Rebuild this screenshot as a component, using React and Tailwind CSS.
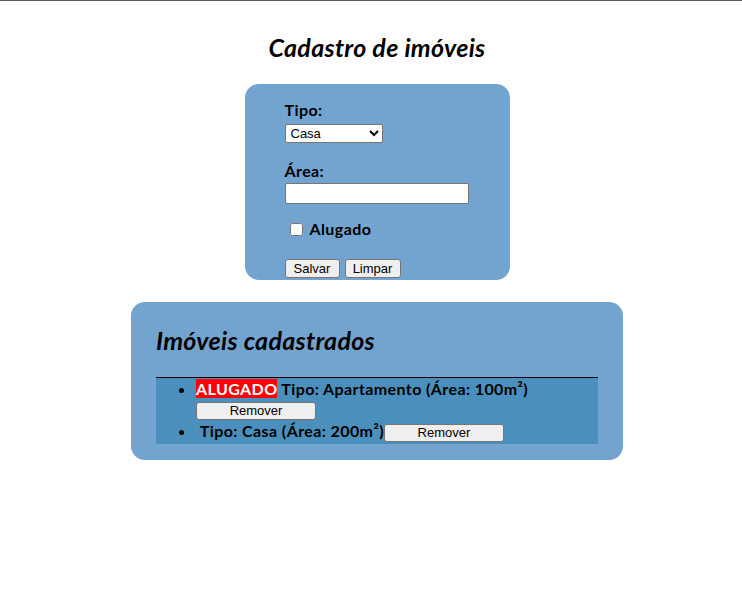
import { useState } from 'react'

const initial = [
  { id: 1, tipo: 'Apartamento', area: 100, alugado: true },
  { id: 2, tipo: 'Casa', area: 200, alugado: false },
]

const btn =
  "bg-[#efefef] border border-[#767676] rounded-[3px] text-[13px] leading-[15px] text-black font-['Liberation_Sans',Arial,sans-serif] font-normal tracking-normal"

export default function App() {
  const [imoveis, setImoveis] = useState(initial)
  const [tipo, setTipo] = useState('Casa')
  const [area, setArea] = useState('')
  const [alugado, setAlugado] = useState(false)

  const salvar = (e) => {
    e.preventDefault()
    if (!area) return
    setImoveis([...imoveis, { id: Date.now(), tipo, area: Number(area), alugado }])
    setArea('')
    setAlugado(false)
  }

  const limpar = () => {
    setTipo('Casa')
    setArea('')
    setAlugado(false)
  }

  return (
    <div className="min-h-screen bg-white border-t border-[#5a5a5a] pl-3 font-['Lato','Noto_Sans',sans-serif] text-black">
      <h1 className="text-center text-[25px] leading-8 tracking-[0.3px] font-bold italic mt-[30px]">
        Cadastro de imóveis
      </h1>

      {/* Formulário */}
      <form
        onSubmit={salvar}
        className="w-[265px] mx-auto mt-[21px] bg-[#73a4cf] rounded-[14px] pl-10 pt-[14px] pb-[2px] font-bold tracking-[0.4px]"
      >
        <label className="block text-base leading-6">Tipo:</label>
        <select
          value={tipo}
          onChange={(e) => setTipo(e.target.value)}
          className="block mt-[2px] w-[98px] h-[19px] bg-white border border-[#767676] rounded-[2px] text-[13px] font-normal tracking-normal font-['Liberation_Sans',Arial,sans-serif] px-[1px]"
        >
          <option>Casa</option>
          <option>Apartamento</option>
        </select>

        <label className="block text-base leading-6 mt-4">Área:</label>
        <input
          type="number"
          value={area}
          onChange={(e) => setArea(e.target.value)}
          className="block w-[184px] h-[21px] bg-white border border-[#767676] rounded-[2px] font-normal text-[13px]"
        />

        <div className="flex items-center mt-[13px] h-6">
          <input
            type="checkbox"
            checked={alugado}
            onChange={(e) => setAlugado(e.target.checked)}
            className="ml-[5px] w-[13px] h-[13px]"
          />
          <span className="ml-[7px] text-base">Alugado</span>
        </div>

        <div className="flex gap-[5px] mt-[18px]">
          <button type="submit" className={`${btn} w-[55px] h-[19px]`}>Salvar</button>
          <button type="button" onClick={limpar} className={`${btn} w-[56px] h-[19px]`}>Limpar</button>
        </div>
      </form>

      {/* Lista */}
      <section className="w-[492px] mx-auto mt-[22px] bg-[#73a4cf] rounded-[14px] px-[25px] pt-[22px] pb-4">
        <h2 className="text-[25px] leading-8 tracking-[0.3px] font-bold italic">Imóveis cadastrados</h2>
        <ul className="mt-[21px] bg-[#4b8fbd] border-t border-black list-disc pl-10 pt-[1px] pb-[1px] font-bold text-base tracking-[0.4px]">
          {imoveis.map((im) => (
            <li key={im.id} className="leading-5">
              {im.alugado ? (
                <span className="bg-[#ff0000] text-white">ALUGADO</span>
              ) : (
                <span className="inline-block w-0"></span>
              )}
              {' '}Tipo: {im.tipo} (Área: {im.area}m²)
              <button
                type="button"
                onClick={() => setImoveis(imoveis.filter((x) => x.id !== im.id))}
                className={`${btn} w-[120px] h-[18px] align-middle my-[1px]`}
              >
                Remover
              </button>
            </li>
          ))}
        </ul>
      </section>
    </div>
  )
}
